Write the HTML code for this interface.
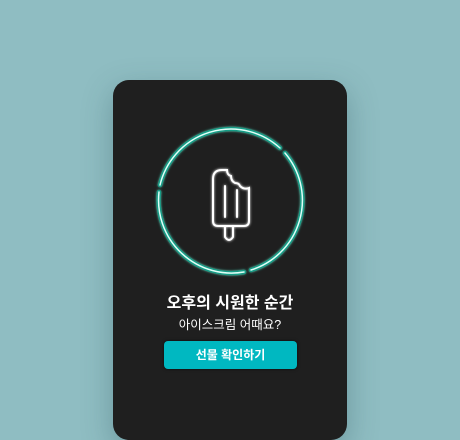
<!DOCTYPE html><html><head><meta charset="utf-8"><style>
html,body{margin:0;width:460px;height:410px;overflow:hidden}
body{background:#8fbdc2;font-family:"Liberation Sans","Noto Sans CJK KR",sans-serif}
.card{position:absolute;left:113px;top:80px;width:234px;height:360px;background:#1f1f1f;border-radius:16px;box-shadow:0 10px 30px rgba(40,80,90,.35)}
.t1{position:absolute;left:113px;width:234px;top:289px;text-align:center;color:#fff;font-weight:bold;font-size:16px}
.t2{position:absolute;left:113px;width:234px;top:314px;text-align:center;color:#fff;font-size:12.5px}
.btn{position:absolute;left:164px;top:341px;width:133px;height:28px;background:#00b8c1;border-radius:4px;color:#fff;font-weight:bold;font-size:12px;text-align:center;line-height:28px;box-shadow:0 0 3px rgba(0,0,0,.6)}
</style></head><body>
<div class="card"></div>
<svg width="460" height="410" style="position:absolute;left:0;top:0">
<defs><filter id="g" x="-50%" y="-50%" width="200%" height="200%"><feGaussianBlur stdDeviation="1.2" result="b"/><feMerge><feMergeNode in="b"/><feMergeNode in="SourceGraphic"/></feMerge></filter></defs>
<g fill="none" stroke-linecap="round" filter="url(#g)">
<g stroke="#139c86" stroke-width="4.5">
<path d="M160 185 A73 73 0 0 1 280 148"/><path d="M285 153 A73 73 0 0 1 251 270"/><path d="M244 272 A73 73 0 0 1 159 192"/></g>
<g stroke="#dffff7" stroke-width="1.5">
<path d="M160 185 A73 73 0 0 1 280 148"/><path d="M285 153 A73 73 0 0 1 251 270"/><path d="M244 272 A73 73 0 0 1 159 192"/></g>
<g stroke="#fff" stroke-width="2">
<path d="M225 226 L225 237 Q229 243 233 237 L233 226"/>
<path d="M225 226 L218 226 Q213 226 213 221 L213 179 Q213 170 222 170 L227 170 Q227 175 231 176 Q231 181 235 183 Q239 183 240 186 Q244 190 249 188 L249 221 Q249 226 244 226 Z"/>
<path d="M225 186 L225 217 M237 190 L237 217"/></g></g>
</svg>
<div class="t1">오후의 시원한 순간</div>
<div class="t2">아이스크림 어때요?</div>
<div class="btn">선물 확인하기</div>
</body></html>
